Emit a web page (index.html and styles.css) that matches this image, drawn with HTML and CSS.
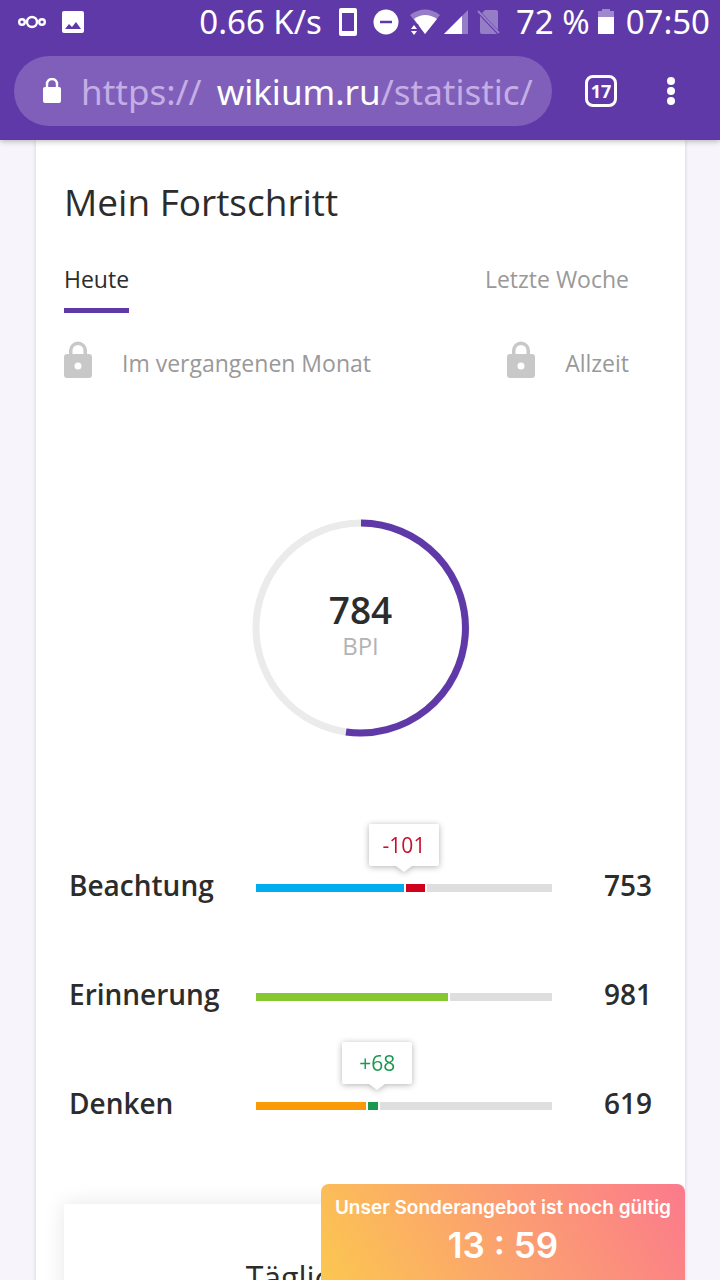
FILE: index.html
```html
<!DOCTYPE html>
<html lang="de">

<head>
    <meta charset="UTF-8" />
    <meta name="viewport" content="width=device-width, initial-scale=1.0" />
    <title>Wikium - Mein Fortschritt</title>
    <link rel="stylesheet" href="styles.css">
</head>

<body>
    <header class="browser">
        <div class="status">
            <svg class="notify" width="28" height="14" viewBox="0 0 28 14" fill="none" stroke="#fff" stroke-width="2.4">
                <circle cx="14" cy="7" r="5" />
                <circle cx="4" cy="7" r="2.800" />
                <circle cx="24" cy="7" r="2.800" />
            </svg>
            <svg width="24" height="24" viewBox="0 0 24 24">
                <path fill="#fff" fill-rule="evenodd" d="M3 1h18a2 2 0 0 1 2 2v18a2 2 0 0 1-2 2H3a2 2 0 0 1-2-2V3a2 2 0 0 1 2-2zM4 19h16l-5-7-4 5-3-3z" />
            </svg>
            <span class="speed">0.66 K/s</span>
            <svg class="phone" width="18" height="28" viewBox="0 0 18 28">
                <path fill="#fff" fill-rule="evenodd" d="M2 0h14a2 2 0 0 1 2 2v24a2 2 0 0 1-2 2H2a2 2 0 0 1-2-2V2a2 2 0 0 1 2-2zM3 5v18h12V5z" />
            </svg>
            <svg class="dnd" width="26" height="26" viewBox="0 0 26 26">
                <circle cx="13" cy="13" r="12.5" fill="#fff" />
                <path d="M7 13h12" stroke="#5f39a8" stroke-width="2.5" />
            </svg>
            <svg class="wifi" width="32" height="26" viewBox="0 0 32 26">
                <path fill="#fff" fill-opacity=".35" d="M1 6Q16-5 31 6L16 25z" />
                <path fill="#fff" d="M5 10Q16 2 28 10L16 25z" />
                <path fill="#5f39a8" d="M1 15h8l4 10H1z" />
                <path fill="#fff" d="M2 20l3-4 3 4zM2 22h6l-3 4z" />
            </svg>
            <svg class="cell" width="24" height="26" viewBox="0 0 24 26">
                <path fill="#fff" fill-opacity=".35" d="M24 1v24H0z" />
                <path fill="#fff" d="M18 7v18H0z" />
            </svg>
            <svg class="nosim" width="24" height="26" viewBox="0 0 24 26">
                <path fill="#fff" fill-opacity=".35" d="M8 1h11a2 2 0 0 1 2 2v18L5 4zM3 7l17 18H5a2 2 0 0 1-2-2z" />
                <path stroke="#fff" stroke-opacity=".35" stroke-width="2" d="M1 2l21 22" />
            </svg>
            <span>72 %</span>
            <svg class="battery" width="16" height="26" viewBox="0 0 16 26">
                <path fill="#fff" fill-opacity=".4" d="M4 0h8v2h4v6H0V2h4z" />
                <path fill="#fff" d="M0 8h16v17H0z" />
            </svg>
            <span>07:50</span>
        </div>
        <div class="toolbar">
            <button class="url" type="button">
                <svg width="20" height="26" viewBox="0 0 20 26">
                    <rect x="1" y="9" width="18" height="16" rx="2" fill="#fff" />
                    <path d="M5 11V6a5 5 0 0 1 10 0v5" fill="none" stroke="#fff" stroke-width="2.4" />
                </svg>
                <span class="address"><span class="scheme">https://</span><span class="host">wikium.ru</span><span>/statistic/</span></span>
            </button>
            <button class="tabcount" type="button">17</button>
            <button class="more" type="button" aria-label="Menü">
                <svg width="8" height="28" viewBox="0 0 8 28" fill="#fff">
                    <circle cx="4" cy="4" r="4" />
                    <circle cx="4" cy="14" r="4" />
                    <circle cx="4" cy="24" r="4" />
                </svg>
            </button>
        </div>
    </header>

    <main>
        <section class="card">
            <h1>Mein Fortschritt</h1>
            <nav class="periods">
                <a href="#today" class="active">Heute</a>
                <a href="#week">Letzte Woche</a>
                <a href="#month">
                    <svg width="28" height="44" viewBox="0 0 28 44">
                        <path fill="#c8c8c8" fill-rule="evenodd" d="M5 13V9.500a9 9 0 0 1 18 0V13h2a3 3 0 0 1 3 3v18a3 3 0 0 1-3 3H3a3 3 0 0 1-3-3V16a3 3 0 0 1 3-3zM8.500 13h11V9.500a5.500 5.500 0 0 0-11 0zM14 21.500a3.500 3.500 0 1 0 0 7 3.500 3.500 0 0 0 0-7z" />
                    </svg>
                    Im vergangenen Monat
                </a>
                <a href="#all">
                    <svg width="28" height="44" viewBox="0 0 28 44">
                        <path fill="#c8c8c8" fill-rule="evenodd" d="M5 13V9.500a9 9 0 0 1 18 0V13h2a3 3 0 0 1 3 3v18a3 3 0 0 1-3 3H3a3 3 0 0 1-3-3V16a3 3 0 0 1 3-3zM8.500 13h11V9.500a5.500 5.500 0 0 0-11 0zM14 21.500a3.500 3.500 0 1 0 0 7 3.500 3.500 0 0 0 0-7z" />
                    </svg>
                    Allzeit
                </a>
            </nav>

            <div class="ring">
                <svg width="218" height="218" viewBox="0 0 218 218" fill="none" stroke-width="7">
                    <circle cx="109" cy="109" r="105" stroke="#ebebeb" />
                    <path d="M109 4A105 105 0 1 1 94 213" stroke="#5f39a8" />
                </svg>
                <div class="score">
                    <strong>784</strong>
                    <span>BPI</span>
                </div>
            </div>

            <ul class="skills">
                <li>
                    <span>Beachtung</span>
                    <div class="track">
                        <div class="bar blue" style="width: 50%"></div>
                        <div class="bar red" style="width: 6.5%"></div>
                        <div class="tip minus" style="left: 50%">-101</div>
                    </div>
                    <span class="value">753</span>
                </li>
                <li>
                    <span>Erinnerung</span>
                    <div class="track">
                        <div class="bar green" style="width: 65%"></div>
                    </div>
                    <span class="value">981</span>
                </li>
                <li>
                    <span>Denken</span>
                    <div class="track">
                        <div class="bar orange" style="width: 37%"></div>
                        <div class="bar dark" style="width: 3.5%"></div>
                        <div class="tip plus" style="left: 41%">+68</div>
                    </div>
                    <span class="value">619</span>
                </li>
            </ul>

            <section class="daily">
                <h2>Tägliche Übung</h2>
            </section>
        </section>
    </main>

    <aside class="offer">
        <p>Unser Sonderangebot ist noch gültig</p>
        <time>13 : 59</time>
    </aside>
</body>

</html>
```

FILE: styles.css
```css
* {
    box-sizing: border-box;
}

body {
    margin: 0;
    height: 100vh;
    overflow: hidden;
    display: flex;
    flex-direction: column;
    position: relative;
    background-color: #f7f5fb;
    color: #2c2c2c;
    font-family: "Open Sans", sans-serif;
}

svg {
    display: block;
    flex: none;
}

button {
    border: 0;
    padding: 0;
    background: none;
    color: white;
    font-family: inherit;
}

h1,
h2,
p,
ul {
    margin: 0;
    padding: 0;
    font-weight: 400;
}

/* browser bar */
.browser {
    flex: none;
    position: relative;
    z-index: 1;
    background-color: #5f39a8;
    color: white;
    font-family: "Noto Sans", sans-serif;
    box-shadow: 0 1px 6px rgba(0, 0, 0, 0.3);
}

.status {
    display: flex;
    align-items: center;
    height: 44px;
    padding: 0 10px 0 18px;
    font-size: 33px;
    line-height: 44px;
    white-space: nowrap;
}

.notify {
    margin-right: 15px;
}

.speed {
    margin-left: auto;
}

.phone {
    margin: 0 16px 0 17px;
}

.wifi {
    margin: 0 3px 0 10px;
}

.nosim {
    margin: 0 15px 0 9px;
}

.battery {
    margin: 0 12px 0 8px;
}

.toolbar {
    display: flex;
    align-items: center;
    padding: 12px 45px 14px 14px;
}

.url {
    flex: 1;
    min-width: 0;
    display: flex;
    align-items: center;
    gap: 19px;
    height: 70px;
    padding: 0 17px 0 28px;
    border-radius: 35px;
    background-color: #805fba;
    color: #c5ade6;
    font-size: 35px;
    line-height: 48px;
}

.address {
    flex: 1;
    padding-top: 2px;
    overflow: hidden;
    white-space: nowrap;
    text-align: left;
}

.scheme {
    margin-right: 15px;
}

.host {
    color: white;
}

.tabcount {
    width: 32px;
    height: 32px;
    margin: 0 50px 0 33px;
    border: 3px solid white;
    border-radius: 8px;
    font-size: 18px;
    font-weight: 700;
    line-height: 26px;
}

/* progress card */
main {
    flex: 1;
    min-height: 0;
    overflow: hidden;
    padding: 0 35px 0 36px;
}

.card {
    padding: 38px 28px 0;
    background-color: white;
    box-shadow: 0 0 4px rgba(0, 0, 0, 0.15);
}

h1 {
    font-size: 37px;
    line-height: 48px;
}

.periods {
    display: grid;
    grid-template-columns: auto auto;
    justify-content: space-between;
    row-gap: 26px;
    margin-top: 34px;
    padding-right: 28px;
}

.periods a {
    display: flex;
    align-items: center;
    gap: 30px;
    height: 48px;
    color: #999999;
    font-size: 23px;
    line-height: 38px;
    text-decoration: none;
}

.periods a:nth-child(-n+2) {
    justify-self: start;
    align-items: flex-start;
    height: 53px;
}

.periods a:nth-child(even) {
    justify-self: end;
}

.periods a.active {
    border-bottom: 5px solid #5f39a8;
    color: #2c2c2c;
}

.ring {
    display: grid;
    place-items: center;
    margin-top: 132px;
}

.ring > * {
    grid-area: 1 / 1;
}

.score {
    padding-bottom: 4px;
    text-align: center;
}

.score strong,
.score span {
    display: block;
}

.score strong {
    font-size: 37px;
    font-weight: 600;
    line-height: 40px;
}

.score span {
    color: #b3b3b3;
    font-size: 24px;
    line-height: 32px;
}

.skills {
    margin-top: 93px;
    padding: 0 5px;
    list-style: none;
}

.skills li {
    display: grid;
    grid-template-columns: 187px 1fr 100px;
    align-items: center;
    height: 109px;
    font-size: 28px;
    font-weight: 600;
}

.value {
    padding-left: 52px;
}

.track {
    position: relative;
    display: flex;
    height: 8px;
    margin-top: 6px;
    background-color: #dedede;
}

.bar {
    box-sizing: content-box;
    border-right: 2px solid white;
}

.blue {
    background-color: #00aeef;
}

.red {
    background-color: #d0021b;
}

.green {
    background-color: #87c832;
}

.orange {
    background-color: #fa9a08;
}

.dark {
    background-color: #1b9850;
}

.tip {
    position: absolute;
    bottom: 26px;
    width: 70px;
    height: 42px;
    transform: translateX(-50%);
    border-radius: 2px;
    background-color: white;
    filter: drop-shadow(0 1px 3px rgba(0, 0, 0, 0.3));
    font-size: 21px;
    font-weight: 400;
    line-height: 42px;
    text-align: center;
}

.tip::after {
    content: "";
    position: absolute;
    top: 100%;
    left: 50%;
    transform: translateX(-50%);
    border: 8px solid transparent;
    border-top: 6px solid white;
    border-bottom: 0;
}

.minus {
    color: #c8102e;
}

.plus {
    color: #1b9850;
}

.daily {
    margin-top: 47px;
    padding: 52px 0;
    background-color: white;
    box-shadow: 0 0 20px rgba(0, 0, 0, 0.1);
    text-align: center;
}

h2 {
    font-size: 32px;
    line-height: 44px;
}

/* countdown over the page */
.offer {
    position: absolute;
    right: 35px;
    bottom: 0;
    z-index: 2;
    padding: 12px 14px 10px;
    border-radius: 8px 8px 0 0;
    background: linear-gradient(60deg, #fbc750, #fba070 50%, #fb7a8c);
    color: white;
    text-align: center;
}

.offer p {
    font-family: Inter, sans-serif;
    font-size: 19px;
    font-weight: 600;
    line-height: 24px;
}

.offer time {
    display: block;
    font-family: Inter, sans-serif;
    font-size: 35px;
    font-weight: 600;
    line-height: 50px;
}
```
